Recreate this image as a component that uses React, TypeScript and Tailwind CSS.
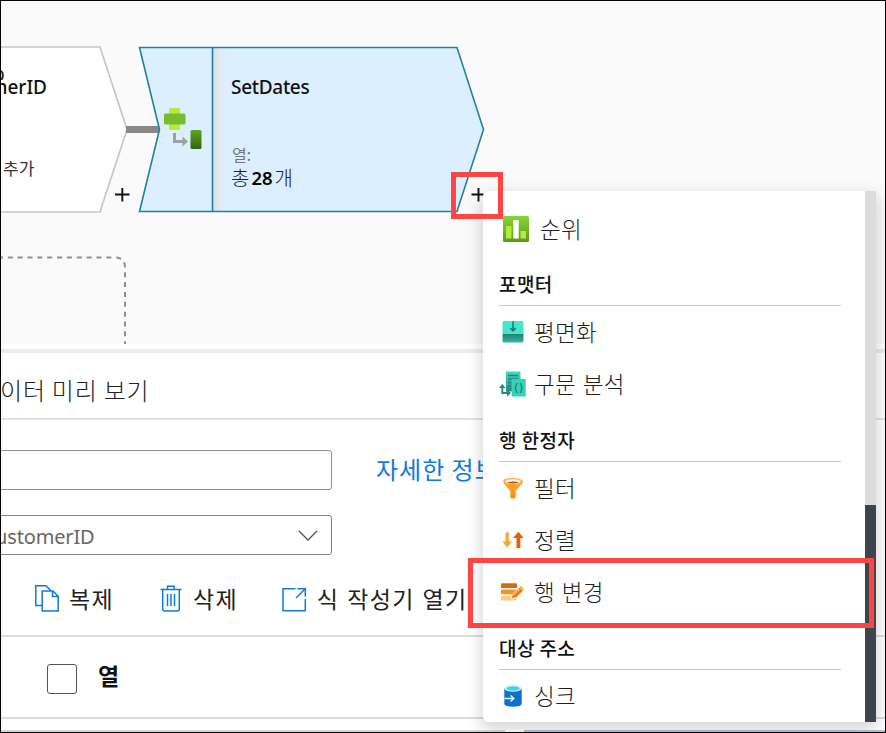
import type { ReactNode } from 'react';

const KR = "font-['Noto_Sans_CJK_KR',sans-serif]";

function CanvasShapes() {
  return (
    <svg className="absolute inset-0" width="886" height="344" viewBox="0 0 886 344" fill="none">
      <defs>
        <linearGradient id="fold" x1="213" x2="227" y1="0" y2="0" gradientUnits="userSpaceOnUse">
          <stop offset="0" stopColor="#d9dee2" />
          <stop offset="0.5" stopColor="#e1ebf3" />
          <stop offset="1" stopColor="#dceffe" />
        </linearGradient>
        <linearGradient id="leaf" x1="0" x2="0" y1="0" y2="1">
          <stop offset="0" stopColor="#5fa321" />
          <stop offset="1" stopColor="#366411" />
        </linearGradient>
      </defs>
      <path d="M-5 47H100L127 129.500L100 212H-5Z" fill="#fff" stroke="#c6c6c6" strokeWidth="1.700" />
      <rect x="126" y="126" width="33" height="7" fill="#8a8886" />
      <path d="M139.500 47.500H457L483.500 129.500L457 211.500H139.500L159.500 129.500Z" fill="#dceffe" />
      <rect x="213" y="48" width="16" height="163" fill="url(#fold)" />
      <path d="M212.500 47V211" stroke="#2280a2" strokeWidth="1.600" />
      <path d="M139.500 47.500H457L483.500 129.500L457 211.500H139.500L159.500 129.500Z" stroke="#2280a2" strokeWidth="1.600" />
      <rect x="169" y="108" width="11" height="22" rx="1.500" fill="#b4ec36" />
      <rect x="164" y="113.500" width="21.500" height="11" rx="1.500" fill="#76bc2d" />
      <path d="M174.500 133V141.500H184" stroke="#a09fa0" strokeWidth="3" />
      <path d="M182.500 136.500L188 141.500L182.500 146.500Z" fill="#a09fa0" />
      <rect x="190.500" y="130" width="11" height="19" rx="1.500" fill="url(#leaf)" />
      <path d="M115 194.500H129.500M122.300 188V201.500" stroke="#111" strokeWidth="1.900" />
      <path d="M471.500 194.500H483.500M478.500 188V201.500" stroke="#111" strokeWidth="1.900" />
      <path d="M-2 257.500H115Q125 257.500 125 267.500V344" stroke="#8f8f8f" strokeWidth="2" strokeDasharray="5 4.850" />
    </svg>
  );
}

function CanvasText() {
  const latin = "absolute whitespace-nowrap font-['Noto_Sans',sans-serif] text-[#111]";
  const hangul = "absolute whitespace-nowrap font-['Noto_Sans_CJK_KR',sans-serif]";
  return (
    <>
      <span className={latin + ' left-[-7px] top-[62px] h-[18px] overflow-hidden text-[19px] leading-[24px]'}>p</span>
      <span className={latin + ' right-[839px] top-[75px] text-[19px] font-medium leading-[24px]'}>CustomerID</span>
      <span className={hangul + ' left-[3px] top-[156px] text-[17px] leading-[24px] text-[#333]'}>추가</span>
      <span className={latin + ' left-[231px] top-[75px] text-[19px] font-medium leading-[24px] tracking-[-0.3px]'}>SetDates</span>
      <span className={hangul + ' left-[232px] top-[142px] text-[16px] leading-[24px] text-[#777]'}>열:</span>
      <span className={hangul + ' left-[231px] top-[166px] flex text-[20px] font-light leading-[24px] text-[#222]'}>
        총<b className="ml-[2px] font-['Noto_Sans',sans-serif] text-[18.5px] font-semibold text-black">28</b>
        <span className="ml-[2px]">개</span>
      </span>
    </>
  );
}

function CopyIcon() {
  return (
    <svg width="24" height="27" viewBox="0 0 24 27" fill="none" stroke="#0f7bdc" strokeWidth="1.500">
      <path d="M7 20.500H.8V.8H11L15.500 5.300M7.200 6H18L23.200 11.200V26H7.200ZM17.500 6V11.500H23" />
    </svg>
  );
}

function TrashIcon() {
  return (
    <svg width="22" height="27" viewBox="0 0 22 27" fill="none" stroke="#0f7bdc" strokeWidth="1.500">
      <path d="M.5 4.500H21.500M7.500 4.500V1.200H14V4.500M2.700 4.500V24Q2.700 26 4.700 26H17.300Q19.300 26 19.300 24V4.500M7.500 9V21M11 9V21M14.500 9V21" />
    </svg>
  );
}

function OpenIcon() {
  return (
    <svg width="25" height="25" viewBox="0 0 25 25" fill="none" stroke="#0f7bdc" strokeWidth="1.500">
      <path d="M13.500 1.800H1V23.800H23.300V12M15.500 1.800H23.300V9.500M23 2L14 11" />
    </svg>
  );
}

function RankIcon() {
  return (
    <svg width="26" height="26" viewBox="0 0 26 26">
      <defs>
        <linearGradient id="rank" x1="0" x2="0" y1="0" y2="1">
          <stop offset="0" stopColor="#86d633" />
          <stop offset="1" stopColor="#5e9624" />
        </linearGradient>
      </defs>
      <rect width="26" height="26" rx="1.500" fill="url(#rank)" />
      <path d="M3 10H8.500V22.500H3ZM17.500 15H23V22.500H17.500Z" fill="#b4ec36" />
      <path d="M10.300 4H15.700V22.500H10.300Z" fill="#fff" />
    </svg>
  );
}

function FlattenIcon() {
  return (
    <svg width="22" height="22" viewBox="0 0 22 22">
      <defs>
        <linearGradient id="flat" x1="0" x2="0" y1="0" y2="1">
          <stop offset="0" stopColor="#237f74" />
          <stop offset="1" stopColor="#35b6a1" />
        </linearGradient>
      </defs>
      <path d="M2 0H20Q21.500 0 21.500 1.500V13H.5V1.500Q.5 0 2 0Z" fill="#43e8ca" />
      <path d="M.5 13H21.500V20Q21.500 21.500 20 21.500H2Q.5 21.500 .5 20Z" fill="url(#flat)" />
      <path d="M11 .5V9.500M8.200 7L11 10L13.800 7" stroke="#1f746c" strokeWidth="1.500" fill="none" />
    </svg>
  );
}

function ParseIcon() {
  return (
    <svg width="27" height="26" viewBox="0 0 27 26" fill="none">
      <defs>
        <linearGradient id="parse" x1="0" x2="0" y1="0" y2="1">
          <stop offset="0" stopColor="#40dcc0" />
          <stop offset="1" stopColor="#268d81" />
        </linearGradient>
      </defs>
      <rect x="7" y=".5" width="14.500" height="20" fill="url(#parse)" />
      <path d="M9 4.500H19M9 8H19M9 11.500H12M9 15H12" stroke="#238579" strokeWidth="1.300" />
      <rect x="12.700" y="8" width="14" height="17.500" fill="#37d1b8" />
      <path d="M18.500 12.500Q17 12.500 17 14.500Q17 16 16.200 16.700Q17 17.500 17 19.500Q17 21.500 18.500 21.500M20.800 12.500Q22.300 12.500 22.300 14.500Q22.300 16 23.100 16.700Q22.300 17.500 22.300 19.500Q22.300 21.500 20.800 21.500" stroke="#1f8379" strokeWidth="1.300" />
      <path d="M3.300 16V22H8.500" stroke="#26897f" strokeWidth="2" />
      <path d="M0 17L3.300 13L6.600 17ZM8 18.500L12 22L8 25.500Z" fill="#26897f" />
    </svg>
  );
}

function FilterIcon() {
  return (
    <svg width="20" height="21" viewBox="0 0 20 21">
      <defs>
        <linearGradient id="funnel" x1="0" x2="0" y1="0" y2="1">
          <stop offset="0" stopColor="#ffb347" />
          <stop offset="1" stopColor="#f58f0a" />
        </linearGradient>
      </defs>
      <path d="M.2 3.500Q.2 0 10 0T19.800 3.500Q19.800 5 18.500 6.500L12.700 13V19Q12.700 20.500 11.200 20.500H9Q7.300 20.500 7.300 19V13L1.500 6.500Q.2 5 .2 3.500Z" fill="url(#funnel)" />
      <ellipse cx="10" cy="3.500" rx="7.800" ry="2.300" fill="#fff3e2" />
      <path d="M4 4.600Q10 2.400 16 4.600Q10 6.500 4 4.600Z" fill="#ca5010" />
    </svg>
  );
}

function SortIcon() {
  return (
    <svg width="22" height="18" viewBox="0 0 22 18">
      <path d="M3.500 1.500H6.800V10.500H10.200L5.200 16.500L.2 10.500H3.500Z" fill="#fba535" />
      <path d="M14.500 17H18.400V7H21.700L16.400 .8L11.100 7H14.500Z" fill="#d9650c" />
    </svg>
  );
}

function AlterRowIcon() {
  return (
    <svg width="23" height="18" viewBox="0 0 23 18">
      <rect y=".3" width="16" height="4.700" rx=".8" fill="#db690b" />
      <rect y="6.500" width="16" height="4.700" rx=".8" fill="#f7941e" />
      <rect y="12.700" width="15.500" height="4.700" rx=".8" fill="#ffcb7d" />
      <path d="M10.300 15.500L11.300 11.200L18.500 4.200L22.300 7.700L15 14.700Z" fill="#e8750e" stroke="#fff" strokeWidth=".8" />
      <path d="M12.500 12.200L19 6" stroke="#ffb347" strokeWidth="1.500" />
      <path d="M18.500 4.200L20 3L22.800 5.800L21.700 7.200Z" fill="#f9a33b" />
    </svg>
  );
}

function SinkIcon() {
  return (
    <svg width="18" height="22" viewBox="0 0 18 22">
      <path d="M.3 3.300V18.500Q.3 21.700 9 21.700T17.700 18.500V3.300Z" fill="#0f72ca" />
      <ellipse cx="9" cy="3.500" rx="8.700" ry="3.200" fill="#d7edf5" />
      <ellipse cx="9" cy="3.500" rx="6.700" ry="2.200" fill="#3fd4ee" />
      <path d="M.5 13.500H9M6.500 10.500L9.800 13.500L6.500 16.500" stroke="#dff3ff" strokeWidth="1.600" fill="none" />
    </svg>
  );
}

function MenuItem({ icon, label, wide }: { icon: ReactNode; label: string; wide?: boolean }) {
  return (
    <div className={wide ? 'flex h-[50px] items-center pl-4' : 'flex h-[52px] items-center pl-4'}>
      <span className={wide ? 'flex w-[41px] justify-start pl-[4px]' : 'flex w-[35px] items-center justify-start'}>
        <span className={wide ? 'block' : 'flex w-[27px] justify-center'}>{icon}</span>
      </span>
      <span className="pb-[3px] text-[22.5px] font-light leading-[30px] tracking-[0.3px] text-[#222] [word-spacing:1.5px]">
        {label}
      </span>
    </div>
  );
}

function MenuHeading({ label }: { label: string }) {
  return (
    <div className="ml-4 mr-6 flex h-[52px] items-center border-b-[1.5px] border-[#c8c8c8] pt-[9px]">
      <span className="text-[19px] font-medium leading-[28px] tracking-[0.4px] text-[#111]">{label}</span>
    </div>
  );
}

function Menu() {
  return (
    <div className="absolute left-[483px] top-[191px] flex h-[531px] w-[393px] overflow-hidden rounded-l-md bg-white">
      <div className="flex flex-1 flex-col pt-[13px]">
        <MenuItem wide icon={<RankIcon />} label="순위" />
        <MenuHeading label="포맷터" />
        <MenuItem icon={<FlattenIcon />} label="평면화" />
        <MenuItem icon={<ParseIcon />} label="구문 분석" />
        <MenuHeading label="행 한정자" />
        <MenuItem icon={<FilterIcon />} label="필터" />
        <MenuItem icon={<SortIcon />} label="정렬" />
        <MenuItem icon={<AlterRowIcon />} label="행 변경" />
        <MenuHeading label="대상 주소" />
        <MenuItem icon={<SinkIcon />} label="싱크" />
      </div>
      <div className="w-[11px] bg-[#dcdcdc] pt-[314px]">
        <div className="h-full bg-[#3c444e]" />
      </div>
    </div>
  );
}

export default function App() {
  const action = 'whitespace-nowrap text-[23px] leading-[30px] tracking-[1.3px] text-[#222] [word-spacing:1.5px]';
  return (
    <div className={'relative flex h-[733px] w-[886px] flex-col overflow-hidden bg-white ' + KR}>
      <section className="relative h-[344px] shrink-0 overflow-hidden bg-[#fafafa]">
        <CanvasShapes />
        <CanvasText />
      </section>
      <div className="mt-[5px] h-1 shrink-0 bg-[#ebebeb]" />
      <div className="flex h-[67px] shrink-0 items-center border-b-2 border-[#e1e1e1] pt-[9px]">
        <span className="whitespace-nowrap text-[24px] font-light tracking-[0.8px] text-[#222]">이터 미리 보기</span>
      </div>
      <div className="flex h-[70px] shrink-0 items-end">
        <div className="-ml-2 h-10 w-[340px] rounded-[3px] border-[1.5px] border-[#8f8f8f]" />
        <span className="mb-[3px] ml-[44px] whitespace-nowrap text-[24px] leading-[36px] tracking-[1px] text-[#0f7bdc]">
          자세한 정보
        </span>
      </div>
      <div className="-ml-2 mt-[25px] flex h-10 w-[340px] shrink-0 items-center justify-between rounded-[3px] border-[1.5px] border-[#858585] pl-[2px] pr-[13px]">
        <span className="pt-[3px] font-['Noto_Sans',sans-serif] text-[20px] tracking-[-0.15px] text-[#666]">ustomerID</span>
        <svg width="20" height="11" viewBox="0 0 20 11" fill="none" stroke="#555" strokeWidth="1.400">
          <path d="M1 1L10 10L19 1" />
        </svg>
      </div>
      <div className="flex h-[82px] shrink-0 items-center border-b-2 border-[#dcdcdc] pl-[35px] pt-[6px]">
        <CopyIcon />
        <span className={action + ' ml-[10px]'}>복제</span>
        <span className="ml-[46px]"><TrashIcon /></span>
        <span className={action + ' ml-[11px]'}>삭제</span>
        <span className="ml-[44px] pt-[2px]"><OpenIcon /></span>
        <span className={action + ' ml-[10px]'}>식 작성기 열기</span>
      </div>
      <div className="flex h-[82px] shrink-0 items-center border-b-2 border-[#dcdcdc] pl-[47px]">
        <span className="mt-[3px] h-[30px] w-[30px] rounded-[3px] border-[1.5px] border-[#555]" />
        <span className="ml-[21px] pb-[3px] text-[23px] font-bold text-[#111]">열</span>
      </div>
      <div className="mt-[11px] flex h-[2px] shrink-0">
        <div className="w-[505px] bg-[#d8d8d8]" />
        <div className="ml-[19px] flex-1 bg-[#a9c8e4]" />
      </div>
      <div className="absolute left-[483px] top-[191px] h-[531px] w-[393px] rounded-md shadow-[0_6px_16px_2px_rgba(0,0,0,0.16)]" />
      <Menu />
      <div className="absolute left-[451px] top-[172px] h-[47px] w-[52px] border-[5px] border-[#ff4444]" />
      <div className="absolute left-[468px] top-[558px] h-[70px] w-[406px] border-[5px] border-[#ff4444]" />
      <div className="pointer-events-none absolute inset-0 border border-black" />
    </div>
  );
}
